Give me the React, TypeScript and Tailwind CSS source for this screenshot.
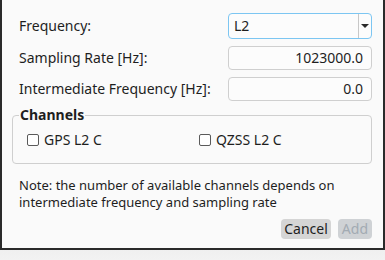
import React from "react";

const font = { fontFamily: '"Noto Sans", "Open Sans", sans-serif' };

function Check({ label }: { label: string }) {
  return (
    <div className="flex items-center gap-[5px]">
      <div className="w-[12px] h-[12px] border border-[#5a5a5a] rounded-[2px] bg-white" />
      <span>{label}</span>
    </div>
  );
}

export default function App() {
  return (
    <div
      className="w-[385px] h-[260px] bg-gradient-to-b from-[#b4b4b4] to-[#f2f2f2] text-[14px] text-[#1e1e1e] leading-[18px]"
      style={font}
    >
      <div className="h-[250px] bg-[#fafafa] border-x-2 border-b-2 border-[#2a2a2a] pl-[17px] pr-[11px] pt-[13px] flex flex-col">
        <div className="flex items-center justify-between h-[26px]">
          <span>Frequency:</span>
          <div className="w-[144px] h-[26px] border border-[#7cc6f2] rounded-[4px] bg-[#fcfcfc] flex items-center">
            <span className="flex-1 pl-[5px]">L2</span>
            <div className="w-px h-[24px] bg-[#c8c8c8]" />
            <div className="w-[12px] flex justify-center">
              <div className="w-0 h-0 border-l-[4px] border-r-[4px] border-t-[4px] border-l-transparent border-r-transparent border-t-[#2a2a2a]" />
            </div>
          </div>
        </div>
        <div className="flex items-center justify-between h-[24px] mt-[7px]">
          <span>Sampling Rate [Hz]:</span>
          <div className="w-[144px] h-[24px] border border-[#cfcfcf] rounded-[4px] bg-[#fcfcfc] flex items-center justify-end pr-[8px]">
            1023000.0
          </div>
        </div>
        <div className="flex items-center justify-between h-[24px] mt-[7px]">
          <span>Intermediate Frequency [Hz]:</span>
          <div className="w-[144px] h-[24px] border border-[#cfcfcf] rounded-[4px] bg-[#fcfcfc] flex items-center justify-end pr-[8px]">
            0.0
          </div>
        </div>
        <div className="relative ml-[-7px] mt-[14px] h-[49px] border border-[#cfcfcf] rounded-[4px] flex items-center pl-[14px] pt-[1px]">
          <span className="absolute left-[6px] top-[-10px] px-[1px] bg-[#fafafa] font-bold leading-[18px]">
            Channels
          </span>
          <div className="w-[172px]">
            <Check label="GPS L2 C" />
          </div>
          <Check label="QZSS L2 C" />
        </div>
        <div className="mt-[13px] text-[13px] leading-[17px]">
          Note: the number of available channels depends on
          <br />
          intermediate frequency and sampling rate
        </div>
        <div className="flex justify-end gap-[7px] mt-[8px]">
          <div className="h-[20px] px-[3px] rounded-[4px] bg-[#d5d5d5] flex items-center">Cancel</div>
          <div className="h-[20px] px-[4px] rounded-[4px] bg-[#cfd2d5] text-[#a3abb3] flex items-center">Add</div>
        </div>
      </div>
    </div>
  );
}
